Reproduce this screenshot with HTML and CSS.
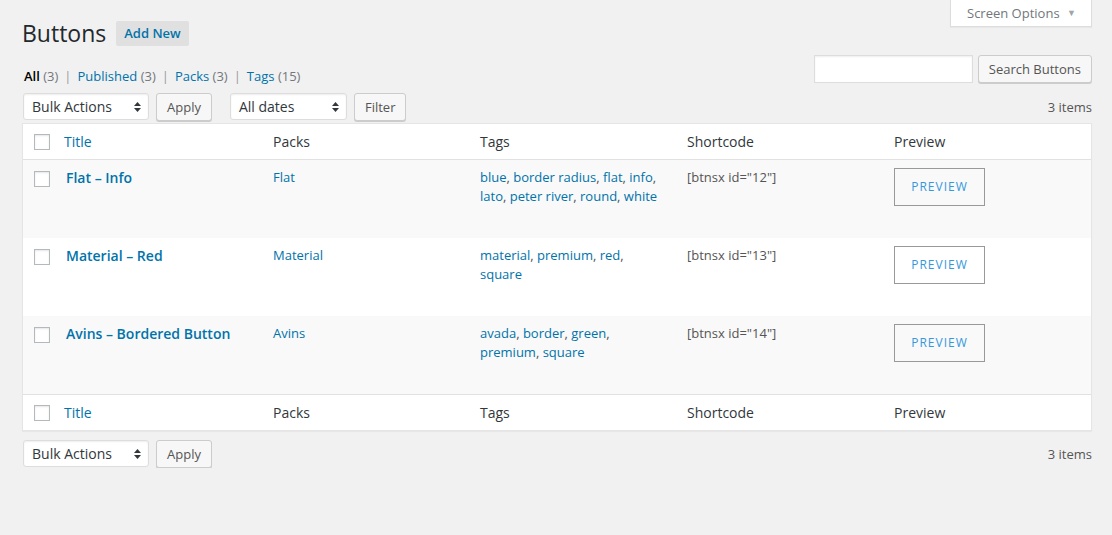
FILE: index.html
```html
<!DOCTYPE html>
<html>
<head>
<meta charset="utf-8">
<link rel="stylesheet" href="styles.css">
</head>
<body>
<div class="wrap">
  <div class="top">
    <div class="title-row">
      <h1 class="page-title">Buttons</h1>
      <a class="add-new">Add New</a>
    </div>
    <div class="screen-options">Screen Options <span class="so-arrow">&#9660;</span></div>
  </div>

  <div class="filters-row">
    <ul class="subsubsub">
      <li><a class="current">All</a> <span class="count">(3)</span><span class="sep">|</span></li>
      <li><a>Published</a> <span class="count">(3)</span><span class="sep">|</span></li>
      <li><a>Packs</a> <span class="count">(3)</span><span class="sep">|</span></li>
      <li><a>Tags</a> <span class="count">(15)</span></li>
    </ul>
    <div class="search-box">
      <div class="search-input"></div>
      <div class="btn">Search Buttons</div>
    </div>
  </div>

  <div class="tablenav top-nav">
    <div class="actions">
      <div class="select bulk">Bulk Actions<svg class="arrows" width="7" height="10" viewBox="0 0 7 10"><path d="M3.5 0 L7 4 L0 4 Z M0 6 L7 6 L3.5 10 Z" fill="#32373c"/></svg></div>
      <div class="btn">Apply</div>
    </div>
    <div class="actions">
      <div class="select dates">All dates<svg class="arrows" width="7" height="10" viewBox="0 0 7 10"><path d="M3.5 0 L7 4 L0 4 Z M0 6 L7 6 L3.5 10 Z" fill="#32373c"/></svg></div>
      <div class="btn">Filter</div>
    </div>
    <div class="num-items">3 items</div>
  </div>

  <table class="list-table">
    <colgroup>
      <col class="c-check">
      <col class="c-title">
      <col class="c-std">
      <col class="c-std">
      <col class="c-std">
      <col class="c-preview">
    </colgroup>
    <thead>
      <tr>
        <th class="check"><span class="cb"></span></th>
        <th><a>Title</a></th>
        <th>Packs</th>
        <th>Tags</th>
        <th>Shortcode</th>
        <th>Preview</th>
      </tr>
    </thead>
    <tbody>
      <tr class="row alt">
        <td class="check"><span class="cb"></span></td>
        <td class="row-title"><a>Flat – Info</a></td>
        <td><a>Flat</a></td>
        <td class="tags"><a>blue</a>, <a>border radius</a>, <a>flat</a>, <a>info</a>, <a>lato</a>, <a>peter river</a>, <a>round</a>, <a>white</a></td>
        <td class="code">[btnsx id="12"]</td>
        <td><span class="preview-btn">PREVIEW</span></td>
      </tr>
      <tr class="row">
        <td class="check"><span class="cb"></span></td>
        <td class="row-title"><a>Material – Red</a></td>
        <td><a>Material</a></td>
        <td class="tags"><a>material</a>, <a>premium</a>, <a>red</a>, <a>square</a></td>
        <td class="code">[btnsx id="13"]</td>
        <td><span class="preview-btn">PREVIEW</span></td>
      </tr>
      <tr class="row alt">
        <td class="check"><span class="cb"></span></td>
        <td class="row-title"><a>Avins – Bordered Button</a></td>
        <td><a>Avins</a></td>
        <td class="tags"><a>avada</a>, <a>border</a>, <a>green</a>, <a>premium</a>, <a>square</a></td>
        <td class="code">[btnsx id="14"]</td>
        <td><span class="preview-btn">PREVIEW</span></td>
      </tr>
    </tbody>
    <tfoot>
      <tr>
        <th class="check"><span class="cb"></span></th>
        <th><a>Title</a></th>
        <th>Packs</th>
        <th>Tags</th>
        <th>Shortcode</th>
        <th>Preview</th>
      </tr>
    </tfoot>
  </table>

  <div class="tablenav bottom-nav">
    <div class="actions">
      <div class="select bulk">Bulk Actions<svg class="arrows" width="7" height="10" viewBox="0 0 7 10"><path d="M3.5 0 L7 4 L0 4 Z M0 6 L7 6 L3.5 10 Z" fill="#32373c"/></svg></div>
      <div class="btn">Apply</div>
    </div>
    <div class="num-items">3 items</div>
  </div>
</div>
</body>
</html>
```

FILE: styles.css
```css
* { box-sizing: border-box; }
html, body {
  margin: 0;
  padding: 0;
  background: #f1f1f1;
}
body {
  font-family: "Open Sans", "Noto Sans", sans-serif;
  font-size: 13px;
  line-height: 1.4;
  color: #444;
}
a { color: #0073aa; text-decoration: none; }

.wrap {
  padding: 0 20px 0 22px;
}

.top {
  display: flex;
  justify-content: space-between;
  align-items: flex-start;
}
.title-row {
  display: flex;
  align-items: center;
  margin-top: 19px;
}
.page-title {
  margin: 0;
  font-size: 23px;
  font-weight: 400;
  line-height: 29px;
  color: #23282d;
}
.add-new {
  margin-left: 10px;
  padding: 4px 8px;
  font-size: 13px;
  font-weight: 600;
  line-height: 17px;
  background: #e0e0e0;
  border-radius: 2px;
  color: #0073aa;
}
.screen-options {
  width: 142px;
  height: 27px;
  background: #fff;
  border: 1px solid #ddd;
  border-top: none;
  box-shadow: 0 1px 1px rgba(0,0,0,.04);
  color: #72777c;
  font-size: 13px;
  line-height: 26px;
  padding-left: 16px;
}
.so-arrow {
  font-size: 9px;
  color: #a0a5aa;
  margin-left: 4px;
  position: relative;
  top: -2px;
}

.filters-row {
  display: flex;
  justify-content: space-between;
  align-items: flex-start;
  margin-top: 7px;
}
.subsubsub {
  list-style: none;
  margin: 12px 0 0 2px;
  padding: 0;
  display: flex;
  font-size: 13px;
  line-height: 18px;
  color: #666;
}
.subsubsub li { white-space: pre; }
.subsubsub .current { color: #000; font-weight: 600; }
.subsubsub .count { color: #72777c; }
.subsubsub .sep { color: #999; margin: 0 6px 0 6px; }

.search-box {
  display: flex;
  gap: 5px;
}
.search-input {
  width: 159px;
  height: 28px;
  background: #fff;
  border: 1px solid #ddd;
  box-shadow: inset 0 1px 2px rgba(0,0,0,.07);
}
.btn {
  height: 28px;
  line-height: 26px;
  padding: 0 10px;
  font-size: 13px;
  color: #555;
  background: #f7f7f7;
  border: 1px solid #ccc;
  border-radius: 3px;
  box-shadow: 0 1px 0 #ccc;
  white-space: nowrap;
}

.tablenav {
  display: flex;
  align-items: center;
  height: 28px;
  padding-left: 1px;
}
.top-nav { margin-top: 8px; margin-bottom: 2px; }
.bottom-nav { margin-top: 9px; }
.actions {
  display: flex;
  gap: 7px;
  margin-right: 18px;
}
.select {
  position: relative;
  height: 27px;
  line-height: 25px;
  padding-left: 8px;
  font-size: 14px;
  color: #32373c;
  background: #fff;
  border: 1px solid #ddd;
  border-radius: 3px;
  box-shadow: inset 0 1px 2px rgba(0,0,0,.07);
}
.select.bulk { width: 126px; }
.select.dates { width: 117px; }
.select .arrows {
  position: absolute;
  right: 7px;
  top: 8px;
}
.num-items {
  margin-left: auto;
  color: #555;
  font-size: 13px;
}

.list-table {
  width: 1070px;
  table-layout: fixed;
  border-collapse: separate;
  border-spacing: 0;
  background: #fff;
  border: 1px solid #e5e5e5;
  box-shadow: 0 1px 1px rgba(0,0,0,.04);
}
.c-check { width: 33px; }
.c-title { width: 209px; }
.c-std { width: 207px; }
.c-preview { width: 205px; }

.list-table th {
  text-align: left;
  font-weight: 400;
  font-size: 14px;
  line-height: 19px;
  padding: 8px 8px;
  color: #32373c;
}
.list-table thead th { border-bottom: 1px solid #e1e1e1; }
.list-table tfoot th { border-top: 1px solid #e1e1e1; }
.list-table th.check { padding: 10px 0 9px 11px; }
.list-table th.check .cb { display: block; }

.list-table .row { height: 78px; }
.list-table .row.alt { background: #f9f9f9; }
.list-table td {
  vertical-align: top;
  padding: 8px 8px;
  font-size: 13px;
  line-height: 19px;
  color: #555;
}
.list-table td.tags { padding-right: 20px; }
.list-table td.check { padding: 11px 0 0 11px; }
.list-table td.check .cb { display: block; }
.list-table td.row-title { padding-left: 10px; }
.list-table td.row-title a {
  font-size: 14px;
  font-weight: 600;
}
.list-table td.code { color: #555; }

.cb {
  width: 16px;
  height: 16px;
  background: #fff;
  border: 1px solid #b4b9be;
  box-shadow: inset 0 1px 2px rgba(0,0,0,.1);
}

.preview-btn {
  display: block;
  width: 91px;
  height: 38px;
  border: 1px solid #999;
  text-align: center;
  line-height: 36px;
  font-size: 12px;
  letter-spacing: 1px;
  color: #3498db;
}
```
